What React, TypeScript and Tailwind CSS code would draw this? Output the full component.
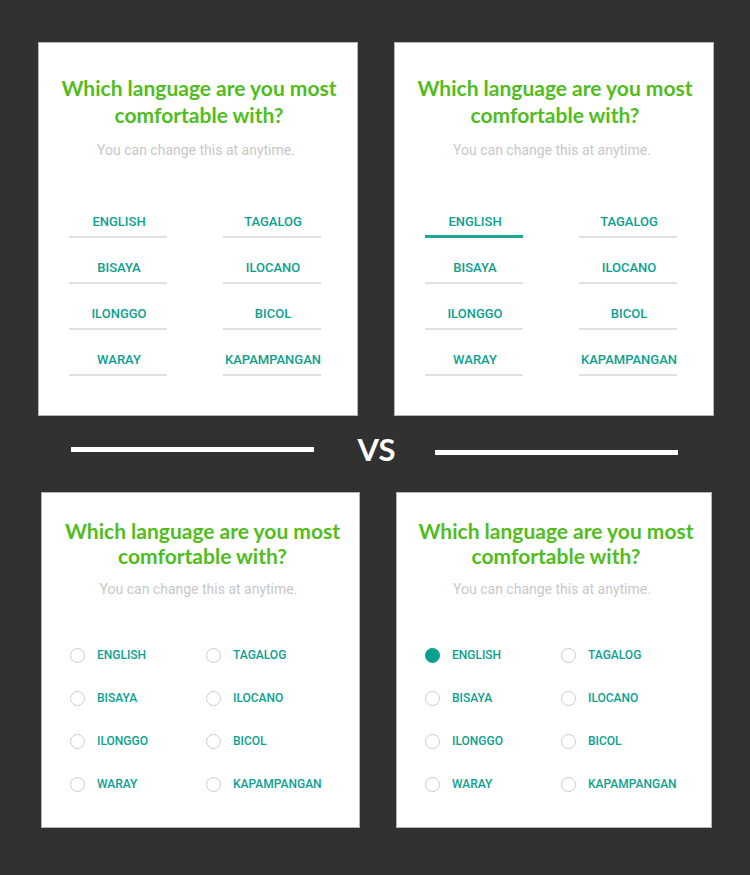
import { useState } from "react";

const LANGUAGES = [
  "ENGLISH",
  "TAGALOG",
  "BISAYA",
  "ILOCANO",
  "ILONGGO",
  "BICOL",
  "WARAY",
  "KAPAMPANGAN",
];

function UnderlineCard({ initial }: { initial?: string }) {
  const [selected, setSelected] = useState(initial);
  return (
    <section className="border border-[#b4b4b4] bg-white pt-[31px] pb-[39px]">
      <h2 className="pl-0.5 text-center font-['Lato',sans-serif] text-[21px] leading-[27px] font-bold text-[#50bd1c]">
        Which language are you most
        <br />
        comfortable with?
      </h2>
      <p className="mt-3 pr-1 text-center text-[14px] leading-5 text-[#c8c8c8]">
        You can change this at anytime.
      </p>
      <div className="mt-10 grid grid-cols-[98px_98px] justify-center gap-x-14 gap-y-2 pr-1.5">
        {LANGUAGES.map((name) => (
          <button
            key={name}
            type="button"
            aria-pressed={selected === name}
            onClick={() => setSelected(name)}
            className={`flex h-[38px] justify-center pt-3 pl-0.5 text-[13px] leading-5 font-medium whitespace-nowrap text-[#0ba191] ${
              selected === name
                ? "border-b-3 border-[#1fa898]"
                : "border-b-2 border-[#e0e0e0]"
            }`}
          >
            {name}
          </button>
        ))}
      </div>
    </section>
  );
}

function RadioCard({ group, initial }: { group: string; initial?: string }) {
  const [selected, setSelected] = useState(initial);
  return (
    <section className="border border-[#b4b4b4] bg-white pt-[25px] pb-[33px]">
      <h2 className="pl-1 text-center font-['Lato',sans-serif] text-[21px] leading-[25px] font-bold text-[#50bd1c]">
        Which language are you most
        <br />
        comfortable with?
      </h2>
      <p className="mt-[11px] pr-1 text-center text-[14px] leading-5 text-[#c8c8c8]">
        You can change this at anytime.
      </p>
      <div className="mt-[46px] grid grid-cols-[136px_1fr] gap-y-[23px] pl-7">
        {LANGUAGES.map((name) => (
          <label
            key={name}
            className="flex items-center gap-3 text-[12px] leading-5 font-medium text-[#0ba191]"
          >
            <input
              type="radio"
              name={group}
              checked={selected === name}
              onChange={() => setSelected(name)}
              className="size-[15px] appearance-none rounded-full border border-[#cbcbcb] bg-white checked:border-[#05a08f] checked:bg-[#05a08f]"
            />
            {name}
          </label>
        ))}
      </div>
    </section>
  );
}

export default function App() {
  return (
    <main className="min-h-screen bg-[#313131] pt-[42px] font-['Roboto',sans-serif]">
      <div className="grid grid-cols-2 gap-9 pr-9 pl-[38px]">
        <UnderlineCard />
        <UnderlineCard initial="ENGLISH" />
      </div>
      <div className="flex h-[76px] items-center pr-[72px] pl-[71px]">
        <div className="mb-[9px] h-[5px] flex-1 bg-white" />
        <span className="mb-2.5 w-[121px] pl-1 text-center font-['Lato',sans-serif] text-[31px] leading-9 font-bold text-white">
          VS
        </span>
        <div className="mb-[3px] h-[5px] flex-1 bg-white" />
      </div>
      <div className="grid grid-cols-[319fr_316fr] gap-9 pr-[38px] pb-12 pl-[41px]">
        <RadioCard group="language-before" />
        <RadioCard group="language-after" initial="ENGLISH" />
      </div>
    </main>
  );
}
